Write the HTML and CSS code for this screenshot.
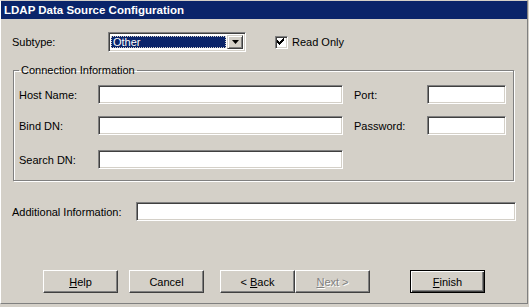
FILE: index.html
```html
<!DOCTYPE html>
<html lang="en">
<head>
  <meta charset="UTF-8">
  <title>LDAP Data Source Configuration</title>
  <link rel="stylesheet" href="styles.css">
</head>
<body>
  <div class="window">
    <div class="titlebar">LDAP Data Source Configuration</div>

    <div class="content">
      <div class="top-row">
        <span class="subtype-label">Subtype:</span>
        <div class="combo">
          <span class="combo-value"><span class="combo-text">Other</span></span>
          <span class="combo-btn">
            <svg width="7" height="4" viewBox="0 0 7 4"><polygon points="0,0 7,0 3.5,4" fill="#000"/></svg>
          </span>
        </div>
        <label class="check">
          <span class="check-box">
            <svg width="9" height="9" viewBox="0 0 9 9" shape-rendering="crispEdges">
              <path d="M6 0h1v1h-1zM5 1h2v1h-2zM0 2h1v1h-1zM4 2h3v1h-3zM0 3h2v1h-2zM3 3h3v1h-3zM0 4h5v1h-5zM1 5h3v1h-3zM2 6h1v1h-1z" fill="#000"/>
            </svg>
          </span>
          Read Only
        </label>
      </div>

      <fieldset class="group">
        <legend>Connection Information</legend>
        <div class="field-row first">
          <span class="field-label">Host Name:</span>
          <div class="textbox wide"></div>
          <span class="field-label short">Port:</span>
          <div class="textbox small"></div>
        </div>
        <div class="field-row second">
          <span class="field-label">Bind DN:</span>
          <div class="textbox wide"></div>
          <span class="field-label short">Password:</span>
          <div class="textbox small"></div>
        </div>
        <div class="field-row third">
          <span class="field-label">Search DN:</span>
          <div class="textbox wide"></div>
        </div>
      </fieldset>

      <div class="extra-row">
        <span class="extra-label">Additional Information:</span>
        <div class="textbox extra"></div>
      </div>

      <div class="buttons">
        <button class="btn help"><u>H</u>elp</button>
        <button class="btn cancel">Cancel</button>
        <button class="btn back">&lt; <u>B</u>ack</button>
        <button class="btn next" disabled><u>N</u>ext &gt;</button>
        <button class="btn finish default"><u>F</u>inish</button>
      </div>
    </div>
  </div>
</body>
</html>
```

FILE: styles.css
```css
body {
  margin: 0;
  background: #d4d0c8;
  font-family: "Liberation Sans", Arial, sans-serif;
  font-size: 11px;
  color: #000;
}

.window {
  width: 528px;
  height: 304px;
  box-sizing: border-box;
  border-left: 1px solid #fff;
  border-top: 1px solid #d4d0c8;
  border-right: 1px solid #808080;
  border-bottom: 1px solid #808080;
  display: flex;
  flex-direction: column;
}

.titlebar {
  height: 18px;
  line-height: 18px;
  padding-left: 3px;
  background: #0a246a;
  color: #fff;
  font-weight: bold;
  font-size: 11.5px;
}

.content {
  padding-left: 11px;
}

/* sunken 3d edge shared by text boxes, combo and checkbox */
.textbox, .combo, .check-box {
  box-sizing: border-box;
  border: 1px solid;
  border-color: #808080 #fff #fff #808080;
  box-shadow: inset 1px 1px 0 #404040, inset -1px -1px 0 #d4d0c8;
  background: #fff;
}

.top-row {
  display: flex;
  align-items: center;
  height: 20px;
  margin-top: 13px;
}

.subtype-label {
  width: 96px;
}

.combo {
  width: 138px;
  height: 20px;
  display: flex;
  padding: 2px;
}

.combo-value {
  flex: 1;
  padding: 1px 1px 1px 0;
  display: flex;
}

.combo-text {
  flex: 1;
  background: #0a246a;
  color: #fff;
  outline: 1px dotted #d4d0c8;
  outline-offset: -1px;
  line-height: 13px;
  padding-left: 2px;
}

.combo-btn {
  width: 16px;
  box-sizing: border-box;
  background: #d4d0c8;
  border: 1px solid;
  border-color: #d4d0c8 #404040 #404040 #d4d0c8;
  box-shadow: inset 1px 1px 0 #fff, inset -1px -1px 0 #808080;
  display: flex;
  align-items: center;
  justify-content: center;
}

.check {
  display: flex;
  align-items: center;
  margin-left: 29px;
}

.check-box {
  width: 13px;
  height: 13px;
  margin-right: 4px;
  display: flex;
  align-items: center;
  justify-content: center;
}

.group {
  width: 501px;
  box-sizing: border-box;
  margin: 12px 0 0 1px;
  padding: 0 7px 11px 5px;
  border: 1px solid #808080;
  box-shadow: 1px 1px 0 #fff, inset 1px 1px 0 #fff;
}

.group legend {
  padding: 0 2px;
  line-height: 13px;
}

.field-row {
  display: flex;
  align-items: center;
  height: 19px;
}

.field-row.first {
  margin-top: 8px;
}

.field-row.second {
  margin-top: 12px;
}

.field-row.third {
  margin-top: 15px;
}

.field-label {
  width: 79px;
}

.field-label.short {
  width: 73px;
  margin-left: 11px;
}

.textbox {
  height: 19px;
}

.textbox.wide {
  width: 245px;
}

.textbox.small {
  width: 79px;
}

.extra-row {
  display: flex;
  align-items: center;
  height: 19px;
  margin-top: 21px;
}

.extra-label {
  width: 124px;
}

.textbox.extra {
  width: 380px;
}

.buttons {
  display: flex;
  margin-top: 49px;
  padding-left: 31px;
}

.btn {
  width: 75px;
  height: 23px;
  box-sizing: border-box;
  padding: 0;
  font-family: inherit;
  font-size: 11px;
  color: #000;
  background: #d4d0c8;
  border: 1px solid;
  border-color: #fff #404040 #404040 #fff;
  box-shadow: inset -1px -1px 0 #808080;
}

.btn.cancel {
  margin-left: 11px;
}

.btn.back {
  margin-left: 16px;
}

.btn.finish {
  margin-left: 40px;
}

.btn:disabled {
  color: #808080;
  text-shadow: 1px 1px 0 #fff;
}

.btn.default {
  border: 1px solid #000;
  box-shadow: inset 1px 1px 0 #fff, inset -1px -1px 0 #404040, inset -2px -2px 0 #808080;
}
```
